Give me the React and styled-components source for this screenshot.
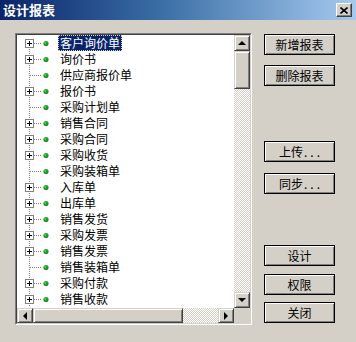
import React from "react";
import styled, { createGlobalStyle } from "styled-components";

const GlobalStyle = createGlobalStyle`
  body {
    margin: 0;
    background: #d4d0c8;
    font-family: "Noto Sans CJK SC", "Liberation Sans", sans-serif;
  }
`;

const items = [
  { name: "客户询价单", plus: true, selected: true },
  { name: "询价书", plus: true },
  { name: "供应商报价单", plus: false },
  { name: "报价书", plus: true },
  { name: "采购计划单", plus: false },
  { name: "销售合同", plus: true },
  { name: "采购合同", plus: true },
  { name: "采购收货", plus: true },
  { name: "采购装箱单", plus: false },
  { name: "入库单", plus: true },
  { name: "出库单", plus: true },
  { name: "销售发货", plus: true },
  { name: "采购发票", plus: true },
  { name: "销售发票", plus: true },
  { name: "销售装箱单", plus: false },
  { name: "采购付款", plus: true },
  { name: "销售收款", plus: true },
];

const buttons = [
  { label: "新增报表", top: 1 },
  { label: "删除报表", top: 10 },
  { label: "上传", dots: true, top: 55 },
  { label: "同步", dots: true, top: 11 },
  { label: "设计", top: 51 },
  { label: "权限", top: 8 },
  { label: "关闭", top: 7 },
];

const Window = styled.div`
  width: 356px;
  height: 342px;
  background: #d4d0c8;
  display: flex;
  flex-direction: column;
  overflow: hidden;
`;

const TitleBar = styled.div`
  height: 20px;
  display: flex;
  align-items: center;
  justify-content: space-between;
  padding: 0 4px 0 3px;
  background: linear-gradient(to right, #0a246a 0%, #3a6ea5 45%, #a6caf0 100%);
`;

const Title = styled.span`
  color: #fff;
  font-size: 13px;
  font-weight: bold;
  line-height: 20px;
`;

const CloseButton = styled.div`
  width: 16px;
  height: 14px;
  box-sizing: border-box;
  background: #d4d0c8;
  border: 1px solid;
  border-color: #fff #404040 #404040 #fff;
  box-shadow: inset -1px -1px 0 #808080;
  display: flex;
  align-items: center;
  justify-content: center;
`;

const Body = styled.div`
  display: flex;
  padding: 13px 0 0 15px;
  gap: 12px;
`;

const TreePanel = styled.div`
  width: 237px;
  height: 292px;
  box-sizing: border-box;
  border: 1px solid;
  border-color: #808080 #fff #fff #808080;
`;

const TreeInner = styled.div`
  height: 100%;
  box-sizing: border-box;
  border: 1px solid;
  border-color: #404040 #d4d0c8 #d4d0c8 #404040;
  display: grid;
  grid-template-columns: 1fr 16px;
  grid-template-rows: 1fr 15px;
  background: #fff;
`;

const TreeList = styled.div`
  overflow: hidden;
  display: flex;
  flex-direction: column;
`;

const Row = styled.div`
  height: 16px;
  display: flex;
  align-items: center;
`;

const Label = styled.span`
  font-size: 12px;
  line-height: 16px;
  height: 16px;
  padding: 0 2px;
  white-space: nowrap;
  color: ${(p) => (p.$selected ? "#fff" : "#000")};
  background: ${(p) => (p.$selected ? "#0a246a" : "transparent")};
  outline: ${(p) => (p.$selected ? "1px dotted #d4d0c8" : "none")};
  outline-offset: -1px;
`;

const Hatch = `
  background: repeating-conic-gradient(#fff 0 25%, #d4d0c8 0 50%) 0 0 / 2px 2px;
`;

const VScroll = styled.div`
  display: flex;
  flex-direction: column;
  ${Hatch}
`;

const HScroll = styled.div`
  display: flex;
  ${Hatch}
`;

const Corner = styled.div`
  background: #d4d0c8;
`;

const Raised = styled.div`
  box-sizing: border-box;
  background: #d4d0c8;
  border: 1px solid;
  border-color: #d4d0c8 #404040 #404040 #d4d0c8;
  box-shadow: inset 1px 1px 0 #fff, inset -1px -1px 0 #808080;
  display: flex;
  align-items: center;
  justify-content: center;
  flex: none;
  width: ${(p) => p.$w}px;
  height: ${(p) => p.$h}px;
`;

const Spacer = styled.div`
  flex: 1;
`;

const ButtonColumn = styled.div`
  display: flex;
  flex-direction: column;
`;

const Button = styled.div`
  width: 71px;
  height: 21px;
  box-sizing: border-box;
  margin-top: ${(p) => p.$top}px;
  border: 1px solid #000;
  box-shadow: inset 1px 1px 0 #fff, inset -1px -1px 0 #808080;
  background: #d4d0c8;
  display: flex;
  align-items: center;
  justify-content: center;
  font-size: 12px;
  color: #000;
`;

const Dots = styled.span`
  letter-spacing: 3px;
  margin-left: 1px;
  margin-right: -3px;
`;

const Connector = ({ plus, first }) => (
  <svg width="41" height="16" style={{ flex: "none", display: "block" }} shapeRendering="crispEdges">
    <line x1="12.5" y1={first ? 8 : 0} x2="12.5" y2="16" stroke="#808080" strokeDasharray="1 1" />
    <line x1="13" y1="8.5" x2="24" y2="8.5" stroke="#808080" strokeDasharray="1 1" />
    {plus && (
      <>
        <rect x="8.5" y="4.5" width="8" height="8" fill="#fff" stroke="#808080" />
        <line x1="10" y1="8.5" x2="15" y2="8.5" stroke="#000" />
        <line x1="12.5" y1="6" x2="12.5" y2="11" stroke="#000" />
      </>
    )}
    <circle cx="29" cy="8.5" r="2.6" fill="#1c9a1c" shapeRendering="auto" />
    <circle cx="28.4" cy="7.8" r="0.9" fill="#6fd66f" shapeRendering="auto" />
  </svg>
);

const arrowPoints = {
  up: "0,4 8,4 4,0",
  down: "0,0 8,0 4,4",
  left: "0,4 4,0 4,8",
  right: "0,0 4,4 0,8",
};

const Arrow = ({ dir }) => {
  const vertical = dir === "up" || dir === "down";
  return (
    <svg width={vertical ? 8 : 4} height={vertical ? 4 : 8} style={{ display: "block" }}>
      <polygon points={arrowPoints[dir]} fill="#000" />
    </svg>
  );
};

export default function App() {
  return (
    <>
      <GlobalStyle />
      <Window>
        <TitleBar>
          <Title>设计报表</Title>
          <CloseButton>
            <svg width="8" height="7" style={{ display: "block" }}>
              <path d="M0.5 0.5 L7.5 6.5 M7.5 0.5 L0.5 6.5" stroke="#000" strokeWidth="1.6" />
            </svg>
          </CloseButton>
        </TitleBar>
        <Body>
          <TreePanel>
            <TreeInner>
              <TreeList>
                {items.map((it, i) => (
                  <Row key={it.name}>
                    <Connector plus={it.plus} first={i === 0} />
                    <Label $selected={it.selected}>{it.name}</Label>
                  </Row>
                ))}
              </TreeList>
              <VScroll>
                <Raised $w={16} $h={16}>
                  <Arrow dir="up" />
                </Raised>
                <Raised $w={16} $h={38} />
                <Spacer />
                <Raised $w={16} $h={16}>
                  <Arrow dir="down" />
                </Raised>
              </VScroll>
              <HScroll>
                <Raised $w={16} $h={15}>
                  <Arrow dir="left" />
                </Raised>
                <Raised $w={150} $h={15} />
                <Spacer />
                <Raised $w={16} $h={15}>
                  <Arrow dir="right" />
                </Raised>
              </HScroll>
              <Corner />
            </TreeInner>
          </TreePanel>
          <ButtonColumn>
            {buttons.map((b) => (
              <Button key={b.label} $top={b.top}>
                {b.label}
                {b.dots && <Dots>...</Dots>}
              </Button>
            ))}
          </ButtonColumn>
        </Body>
      </Window>
    </>
  );
}
